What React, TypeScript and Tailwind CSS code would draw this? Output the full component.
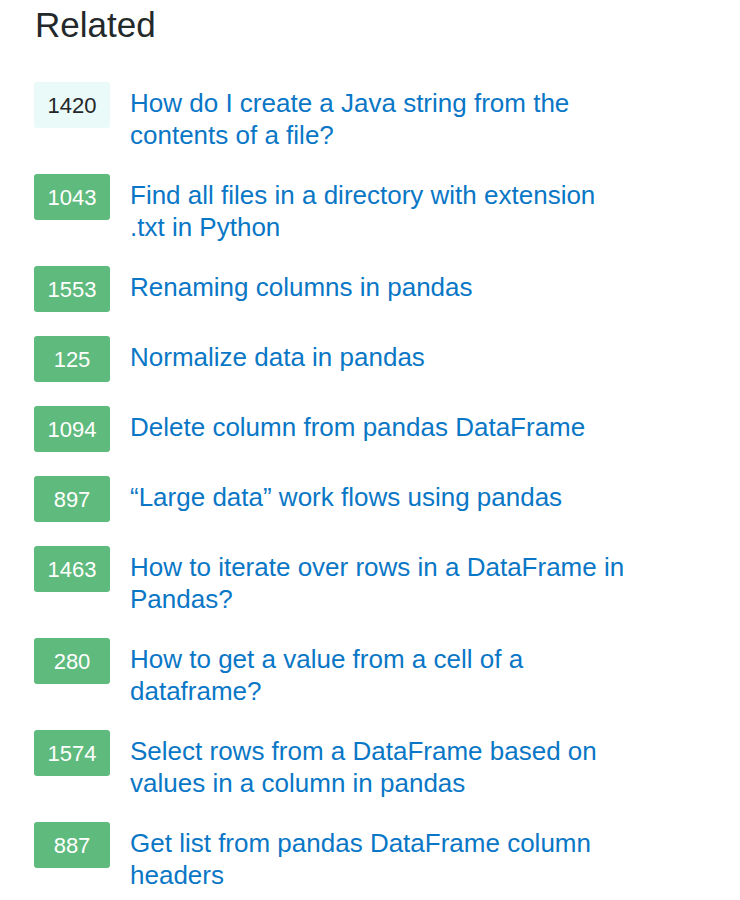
export default function App() {
  const items = [
    { score: "1420", title: "How do I create a Java string from the contents of a file?", accepted: false },
    { score: "1043", title: "Find all files in a directory with extension .txt in Python", accepted: true },
    { score: "1553", title: "Renaming columns in pandas", accepted: true },
    { score: "125", title: "Normalize data in pandas", accepted: true },
    { score: "1094", title: "Delete column from pandas DataFrame", accepted: true },
    { score: "897", title: "\u201cLarge data\u201d work flows using pandas", accepted: true },
    { score: "1463", title: "How to iterate over rows in a DataFrame in Pandas?", accepted: true },
    { score: "280", title: "How to get a value from a cell of a dataframe?", accepted: true },
    { score: "1574", title: "Select rows from a DataFrame based on values in a column in pandas", accepted: true },
    { score: "887", title: "Get list from pandas DataFrame column headers", accepted: true },
  ]

  return (
    <div className="min-h-[900px] bg-white pl-[34px] pt-[5px] font-['Liberation_Sans',Arial,sans-serif]">
      <h2 className="text-[35px] leading-[40px] text-[#23292a] mb-[37px] pl-[1px]">Related</h2>
      <div className="flex flex-col gap-[24px]">
        {items.map((item, idx) => (
          <div key={idx} className="flex items-start gap-[20px]">
            <div
              className={
                item.accepted
                  ? "w-[76px] h-[46px] shrink-0 rounded-[3px] bg-[#5fba7d] text-white flex items-center justify-center text-[22px]"
                  : "w-[76px] h-[46px] shrink-0 rounded-[3px] bg-[#eafaf8] text-[#242729] flex items-center justify-center text-[22px]"
              }
            >
              {item.score}
            </div>
            <a className="pt-[5px] -mb-px text-[26px] leading-[32px] text-[#0a77c6] max-w-[500px]">{item.title}</a>
          </div>
        ))}
      </div>
    </div>
  )
}
